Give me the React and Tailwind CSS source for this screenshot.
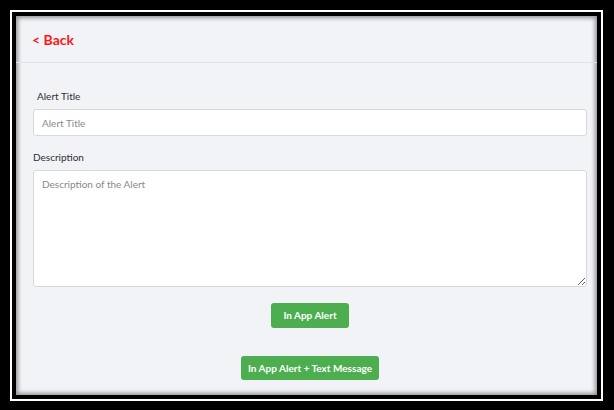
export default function App() {
  const font = { fontFamily: 'Lato, "Open Sans", sans-serif' };
  return (
    <div className="w-[614px] h-[410px] bg-black pl-[10px] pt-[10px] pr-[11px] pb-[9px]" style={font}>
      <div className="w-full h-full border-2 border-white">
        <div className="w-full h-full border-4 border-black">
          <div className="w-full h-full bg-[#f2f3f7] shadow-[inset_0_0_4px_2px_rgba(0,0,0,0.4)] flex flex-col overflow-hidden">
            <div className="h-[47px] shrink-0 border-b border-[#e2e3e7] flex items-center pl-[16px] pt-[2px]">
              <span className="text-[14px] font-bold text-[#ff1616] leading-none">&lt; Back</span>
            </div>
            <div className="flex flex-col pl-[17px] pr-[10px]">
              <label className="mt-[26px] ml-[4px] text-[10px] leading-[14px] text-[#2f2f2f]">Alert Title</label>
              <input
                className="mt-[6px] h-[27px] w-full bg-white border border-[#d8d9dd] rounded-[3px] px-[8px] text-[10px] placeholder:text-[#8a8a8a] outline-none"
                placeholder="Alert Title"
              />
              <label className="mt-[14px] text-[10px] leading-[14px] text-[#2f2f2f]">Description</label>
              <textarea
                className="mt-[6px] h-[117px] w-full bg-white border border-[#d8d9dd] rounded-[3px] px-[8px] pt-[6px] pb-[6px] text-[10px] leading-[14px] placeholder:text-[#8a8a8a] outline-none resize-y"
                placeholder="Description of the Alert"
              />
              <div className="flex flex-col items-center">
                <button className="mt-[16px] h-[25px] px-[12px] bg-[#4cae4f] text-white text-[10px] font-bold rounded-[3px]">In App Alert</button>
                <button className="mt-[28px] h-[24px] px-[7px] bg-[#4cae4f] text-white text-[10px] font-bold rounded-[3px]">In App Alert + Text Message</button>
              </div>
            </div>
          </div>
        </div>
      </div>
    </div>
  );
}
